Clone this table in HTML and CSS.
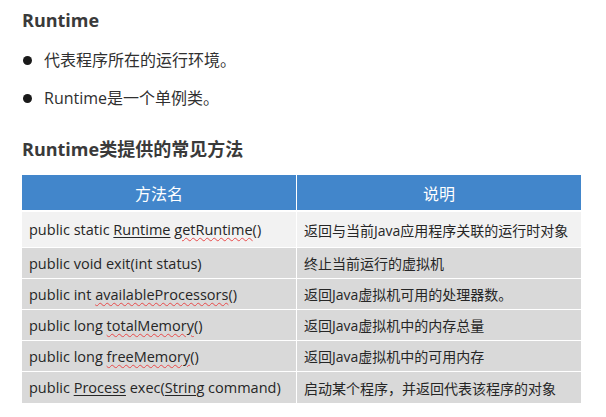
FILE: index.html
```html
<!DOCTYPE html>
<html>
<head>
<meta charset="utf-8">
<link rel="stylesheet" href="styles.css">
</head>
<body>
<div class="page">
  <h1 class="title">Runtime</h1>
  <ul class="bullets">
    <li><span>代表程序所在的运行环境。</span></li>
    <li><span>Runtime是一个单例类。</span></li>
  </ul>
  <h2 class="subtitle">Runtime类提供的常见方法</h2>
  <div class="table">
    <div class="row head">
      <div class="cell"><span>方法名</span></div>
      <div class="cell"><span>说明</span></div>
    </div>
    <div class="row light tall">
      <div class="cell code"><span>public static <span class="ul">Runtime</span> <span class="sp">getRuntime</span>()</span></div>
      <div class="cell"><span>返回与当前Java应用程序关联的运行时对象</span></div>
    </div>
    <div class="row">
      <div class="cell code"><span>public void exit(int status)</span></div>
      <div class="cell"><span>终止当前运行的虚拟机</span></div>
    </div>
    <div class="row">
      <div class="cell code"><span>public int <span class="sp">availableProcessors</span>()</span></div>
      <div class="cell"><span>返回Java虚拟机可用的处理器数。</span></div>
    </div>
    <div class="row">
      <div class="cell code"><span>public long <span class="sp">totalMemory</span>()</span></div>
      <div class="cell"><span>返回Java虚拟机中的内存总量</span></div>
    </div>
    <div class="row">
      <div class="cell code"><span>public long <span class="sp">freeMemory</span>()</span></div>
      <div class="cell"><span>返回Java虚拟机中的可用内存</span></div>
    </div>
    <div class="row last">
      <div class="cell code"><span>public <span class="ul">Process</span> exec(<span class="ul">String</span> command)</span></div>
      <div class="cell"><span>启动某个程序，并返回代表该程序的对象</span></div>
    </div>
  </div>
</div>
</body>
</html>
```

FILE: styles.css
```css
html, body {
  margin: 0;
  padding: 0;
  background: #ffffff;
}
.page {
  padding: 8px 0 0 22px;
  font-family: "Open Sans", "Noto Sans CJK SC", sans-serif;
  color: #262626;
}
.title {
  margin: 0;
  font-size: 18px;
  line-height: 24px;
  font-weight: 700;
  color: #3a3a3a;
}
.bullets {
  list-style: none;
  margin: 0;
  padding: 0;
}
.bullets li {
  display: flex;
  align-items: center;
  font-size: 16px;
  line-height: 20px;
  margin-top: 18px;
  color: #303030;
}
.bullets li::before {
  content: "";
  width: 9px;
  height: 9px;
  border-radius: 50%;
  background: #1a1a1a;
  margin: 0 12px 0 1px;
}
.subtitle {
  margin: 29px 0 0 0;
  font-size: 18px;
  line-height: 24px;
  font-weight: 700;
  color: #3a3a3a;
}
.table {
  margin-top: 14px;
  width: 559px;
  display: flex;
  flex-direction: column;
  gap: 1px;
}
.row {
  display: grid;
  grid-template-columns: 274px 284px;
  column-gap: 1px;
  height: 30px;
}
.row.head {
  height: 35px;
  margin-bottom: 1px;
}
.row.tall {
  height: 35px;
}
.row.last {
  height: 31px;
}
.cell {
  background: #d9d9d9;
  display: flex;
  align-items: center;
  padding-left: 7px;
  font-size: 14px;
  white-space: nowrap;
}
.cell.code {
  font-size: 14.5px;
}
.head .cell {
  background: #4286cb;
  color: #ffffff;
  justify-content: center;
  padding-left: 0;
  font-size: 16px;
}
.light .cell {
  background: #f2f2f2;
}
.ul {
  text-decoration: underline;
  text-underline-offset: 2px;
}
.sp {
  text-decoration: underline wavy #e84a4a;
  text-decoration-thickness: 1px;
  text-underline-offset: 2px;
}
```
